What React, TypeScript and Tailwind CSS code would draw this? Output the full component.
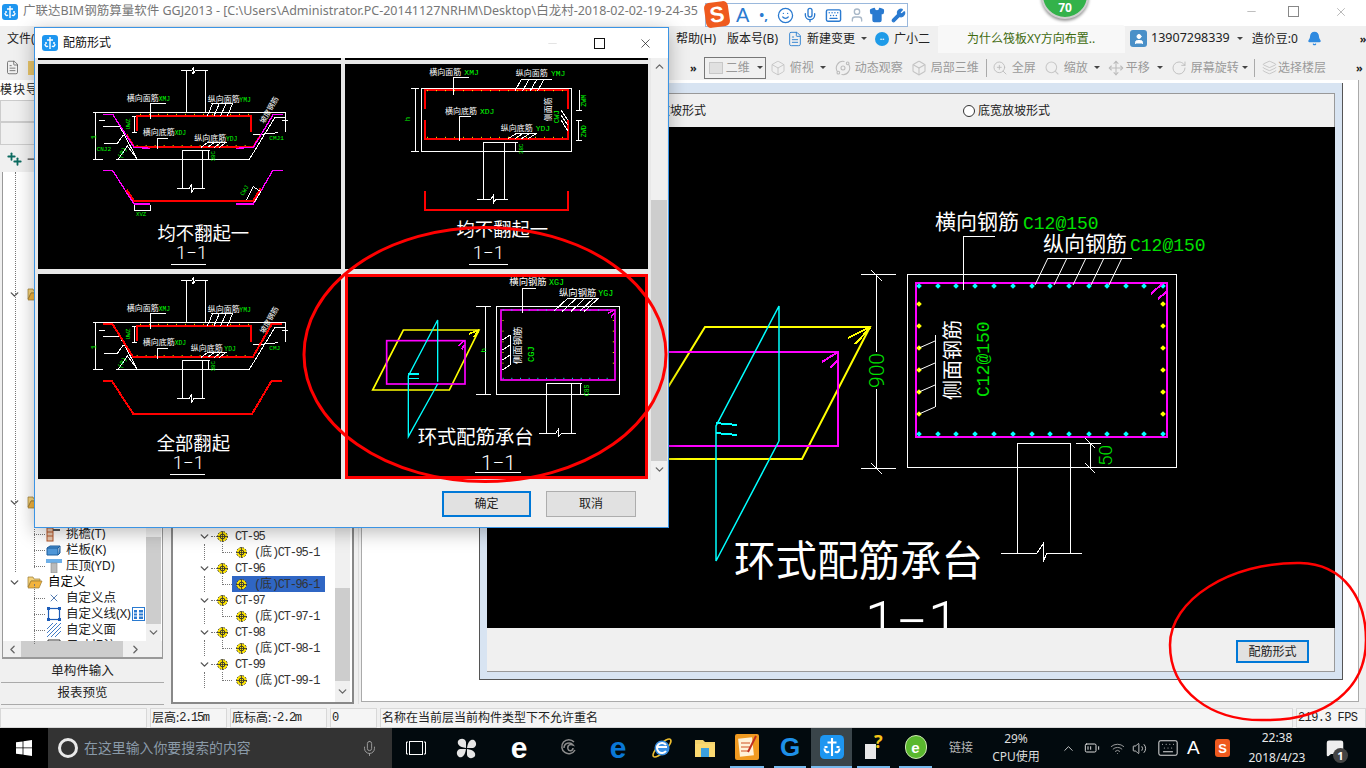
import React from "react";
import {
  Box, ChevronDown, ChevronLeft, ChevronRight, ChevronUp, Keyboard, Layers, Mic, Minus, Move, RotateCw, Search, Shirt, Smile, Volume2, Wifi, Wrench, X, ZoomIn, BatteryMedium, FileText, MessageSquare, Orbit, Bell, User, Plus,
} from "lucide-react";

const CJK = "'Noto Sans CJK SC',sans-serif";
const MONO = "'Liberation Mono','Noto Sans CJK SC',monospace";
const LIGHT = "Roboto,'Liberation Sans',sans-serif";

type PL = { p: string; c?: string; w?: number };
const Pl = ({ p, c = "#fff", w = 3 }: PL) => (
  <polyline points={p} fill="none" stroke={c} strokeWidth={w} shapeRendering="crispEdges" />
);
type TP = { x: number; y: number; t: string; c?: string; s?: number; r?: number; a?: "start" | "middle"; f?: string; fw?: number };
const Tx = ({ x, y, t, c = "#fff", s = 24, r, a = "start", f = CJK, fw }: TP) => (
  <text x={x} y={y} fill={c} fontSize={s} fontFamily={f} fontWeight={fw} textAnchor={a} transform={r !== undefined ? `rotate(${r} ${x} ${y})` : undefined}>
    {t}
  </text>
);
const G = "#00ff00";
const R = "#ff0000";
const M = "#ff00ff";
const Y = "#ffff00";
const C = "#00ffff";

const AppIcon = ({ size = 16 }: { size?: number }) => (
  <svg width={size} height={size} viewBox="0 0 16 16" className="shrink-0">
    <rect width="16" height="16" rx="3" fill="#1e96f0" />
    <path d="M8 2v12M5 5h6M3 9c0 2.5 2 3 3 2M13 9c0 2.5-2 3-3 2M3 8h2M11 8h2" stroke="#fff" strokeWidth="1.4" fill="none" />
  </svg>
);

const Hatch = ({ top, dx, y1, y2, w = 3 }: { top: number[]; dx: number; y1: number; y2: number; w?: number }) => (
  <>
    {top.map((x) => (
      <Pl key={x} p={`${x},${y1} ${x + dx},${y2}`} w={w} />
    ))}
  </>
);

const Trough = ({ all }: { all?: boolean }) => (
  <svg width="303" height="205" viewBox="-6 12 909 615" className="block">
    <Pl p="424,30 456,30 462,22 458,42 468,30 505,30" />
    <Pl p="438,30 438,157" />
    <Pl p="497,30 497,157" />
    <Pl p="185,157 735,157" />
    <Pl p="188,200 240,200 292,298 228,298 628,298 705,172 735,172" />
    <Pl p="428,298 428,272 487,272 487,384" />
    <Pl p="428,298 428,384" />
    <Pl p="412,384 448,384 455,374 455,396 462,384 495,384" />
    <Pl p="487,272 510,272" />
    <Pl p="504,272 504,298" />
    <Pl p="165,157 165,298" />
    <Pl p="158,157 188,157" />
    <Pl p="158,298 188,298" />
    <Pl p="735,157 735,215" />
    <Pl p="176,182 196,182" />
    <Pl p="726,180 744,180" />
    <Pl p="283,168 283,216" />
    <Pl p="276,168 292,168" />
    <Pl p="276,216 292,216" />
    <Pl p="192,250 232,250 250,225" />
    <Pl p="235,298 262,258 292,298" />
    <Pl p="640,225 715,218" />
    <Pl p="292,213 292,167 632,167 632,215" c={R} w={6} />
    <line x1="300" y1="163" x2="628" y2="163" stroke={Y} strokeWidth="3" strokeDasharray="3 24" />
    <line x1="290" y1="257" x2="636" y2="257" stroke={Y} strokeWidth="3" strokeDasharray="3 24" />
    {all ? (
      <>
        <Pl p="188,163 218,163 280,262 638,262 695,163 725,163" c={R} w={6} />
        <Pl p="188,332 215,332 280,432 636,432 695,332 725,332" c={R} w={6} />
      </>
    ) : (
      <>
        <Pl p="260,225 282,260 640,260 662,225" c={R} w={6} />
        <Pl p="190,163 218,163 282,262 330,265" c={M} w={4} />
        <Pl p="588,265 640,262 700,163 730,163" c={M} w={4} />
        <Pl p="190,332 218,332 282,432 330,432" c={M} w={4} />
        <Pl p="588,432 640,432 698,332 728,332" c={M} w={4} />
        <Pl p="260,390 282,422 640,422 662,385" c={R} w={6} />
        <Pl p="283,436 283,450 330,450 330,436" />
        <Pl p="620,420 640,380 662,395 644,425" />
      </>
    )}
    <Tx x={260} y={123} t="横向面筋" s={24} />
    <Tx x={356} y={123} t="XMJ" c={G} s={19} f={MONO} />
    <Pl p="332,177 332,130 378,130" />
    <Tx x={503} y={126} t="纵向面筋" s={24} />
    <Tx x={598} y={126} t="YMJ" c={G} s={19} f={MONO} />
    <Pl p="512,130 578,130" />
    <Hatch top={[518, 538, 558, 578]} dx={-16} y1={130} y2={168} />
    <Tx x={308} y={226} t="横向底筋" s={24} />
    <Tx x={404} y={226} t="XDJ" c={G} s={19} f={MONO} />
    <Pl p="352,266 352,235 385,235" />
    <Tx x={all ? 452 : 463} y={242} t="纵向底筋" s={24} />
    <Tx x={all ? 553 : 558} y={242} t="YDJ" c={G} s={19} f={MONO} />
    <Pl p="500,246 560,246" />
    <Hatch top={[505, 525, 545, 560]} dx={-22} y1={246} y2={262} />
    <Tx x={270} y={208} t="UWZ" c={G} s={18} r={-90} f={MONO} />
    <Tx x={167} y={238} t="1" c={G} s={22} r={-90} f={MONO} />
    {all ? null : <Tx x={170} y={272} t="CNJ2" c={G} s={18} f={MONO} />}
    <Tx x={688} y={240} t={all ? "CMJ" : "CMJ1"} c={G} s={18} f={MONO} />
    <Tx x={526} y={304} t="38C" c={G} s={17} r={-90} f={MONO} />
    <Tx x={243} y={296} t="(P)" c={G} s={19} r={-60} f={MONO} />
    <Tx x={672} y={192} t="坡度钢筋" s={22} r={-60} />
    {all ? null : <Tx x={610} y={408} t="CWJ" c={G} s={18} r={-60} f={MONO} />}
    {all ? null : <Tx x={288} y={467} t="XVZ" c={G} s={17} f={MONO} />}
    <Tx x={all ? 460 : 490} y={540} t={all ? "全部翻起" : "均不翻起一"} s={55} a="middle" />
    <Tx x={all ? 445 : 455} y={597} t="1−1" s={56} a="middle" f={LIGHT} fw={300} />
    <Pl p={all ? "390,612 495,612" : "393,612 497,612"} />
  </svg>
);

const Flat = () => (
  <svg width="303" height="205" viewBox="0 12 909 615" className="block">
    <rect x="229" y="85" width="451" height="190" fill="none" stroke="#fff" strokeWidth="3" shapeRendering="crispEdges" />
    <Pl p="240,148 240,90 668,90 668,148" c={R} w={6} />
    <Pl p="240,180 240,236 668,236 668,180" c={R} w={6} />
    <line x1="246" y1="92" x2="660" y2="92" stroke={Y} strokeWidth="3" strokeDasharray="3 24" />
    <line x1="246" y1="232" x2="660" y2="232" stroke={Y} strokeWidth="3" strokeDasharray="3 24" />
    <Pl p="415,418 415,248 478,248 478,418" />
    <Pl p="397,418 438,418 445,406 445,430 452,418 490,418" />
    <Pl p="240,393 240,450 668,450 668,393" c={R} w={6} />
    <Pl p="210,85 210,275" />
    <Pl p="197,85 222,85" />
    <Pl p="197,275 222,275" />
    <Tx x={194} y={184} t="h" c={G} s={22} r={-90} f={MONO} />
    <Tx x={253} y={45} t="横向面筋" s={24} />
    <Tx x={358} y={45} t="XMJ" c={G} s={24} f={MONO} />
    <Pl p="325,105 325,52 372,52" />
    <Tx x={512} y={48} t="纵向面筋" s={24} />
    <Tx x={618} y={48} t="YMJ" c={G} s={24} f={MONO} />
    <Pl p="530,57 620,57" />
    <Hatch top={[530, 553, 576, 598]} dx={-20} y1={57} y2={92} />
    <Tx x={300} y={162} t="横向底筋" s={24} />
    <Tx x={405} y={162} t="XDJ" c={G} s={24} f={MONO} />
    <Pl p="343,242 343,170 378,170" />
    <Tx x={467} y={213} t="纵向底筋" s={24} />
    <Tx x={572} y={213} t="YDJ" c={G} s={24} f={MONO} />
    <Pl p="515,220 575,220" />
    <Hatch top={[515, 535, 555, 575]} dx={-26} y1={220} y2={236} />
    <Tx x={618} y={184} t="侧面筋" s={24} r={-90} />
    <Tx x={642} y={190} t="CWJ" c={G} s={22} r={-90} f={MONO} />
    <Pl p="648,150 668,180" />
    <Pl p="648,165 668,195" />
    <Pl p="648,180 668,212" />
    <Pl p="703,90 703,152" />
    <Pl p="694,152 712,152" />
    <Pl p="700,182 700,240" />
    <Pl p="692,182 712,182" />
    <Pl p="692,240 712,240" />
    <Tx x={724} y={140} t="ZWM" c={G} s={20} r={-90} f={MONO} />
    <Tx x={724} y={232} t="ZWD" c={G} s={20} r={-90} f={MONO} />
    <Pl p="512,248 512,275" />
    <Pl p="478,248 520,248" />
    <Tx x={534} y={282} t="38C" c={G} s={17} r={-90} f={MONO} />
    <Tx x={472} y={528} t="均不翻起一" s={55} a="middle" />
    <Tx x={430} y={597} t="1−1" s={56} a="middle" f={LIGHT} fw={300} />
    <Pl p="372,612 490,612" />
  </svg>
);

const Ring = () => (
  <svg width="297" height="199" viewBox="9 21 891 597" className="block">
    <polygon points="175,180 402,180 313,360 83,360" fill="none" stroke={Y} strokeWidth="5" />
    <Pl p="372,192 402,180" c={Y} w={5} />
    <Pl p="385,202 402,182" c={Y} w={5} />
    <rect x="125" y="212" width="235" height="130" fill="none" stroke={M} strokeWidth="5" />
    <Pl p="340,228 358,212" c={M} w={5} />
    <Pl p="350,238 358,225" c={M} w={5} />
    <polyline points="278,335 278,150 190,318 190,500 278,342" fill="none" stroke={C} strokeWidth="4" />
    <Pl p="190,312 222,312" c={C} w={4} />
    <Pl p="190,326 222,326" c={C} w={4} />
    <rect x="454" y="109" width="370" height="265" fill="none" stroke="#fff" strokeWidth="3" shapeRendering="crispEdges" />
    <rect x="468" y="120" width="342" height="210" fill="none" stroke={M} strokeWidth="5" />
    <line x1="473" y1="120" x2="808" y2="120" stroke={C} strokeWidth="3" strokeDasharray="3 23" />
    <line x1="473" y1="325" x2="808" y2="325" stroke={C} strokeWidth="3" strokeDasharray="3 23" />
    <line x1="474" y1="150" x2="474" y2="310" stroke={Y} strokeWidth="3" strokeDasharray="3 29" />
    <line x1="805" y1="150" x2="805" y2="310" stroke={Y} strokeWidth="3" strokeDasharray="3 29" />
    <Pl p="788,130 808,120" c={M} w={4} />
    <Pl p="798,142 808,128" c={M} w={4} />
    <Pl p="604,490 604,340 680,340 680,490" />
    <Pl p="583,490 632,490 640,478 640,500 650,490 692,490" />
    <Pl p="420,109 420,372" />
    <Pl p="393,109 438,109" />
    <Pl p="393,372 438,372" />
    <Tx x={424} y={248} t="h" c={G} s={24} r={-90} f={MONO} />
    <Tx x={493} y={46} t="横向钢筋" s={28} />
    <Tx x={612} y={46} t="XGJ" c={G} s={25} f={MONO} />
    <Pl p="533,130 533,55 572,55" />
    <Tx x={642} y={77} t="纵向钢筋" s={28} />
    <Tx x={760} y={77} t="YGJ" c={G} s={25} f={MONO} />
    <Pl p="665,85 762,85" />
    <Hatch top={[668, 694, 720, 746, 760]} dx={-42} y1={85} y2={124} />
    <Tx x={528} y={282} t="侧面钢筋" s={28} r={-90} />
    <Tx x={566} y={276} t="CGJ" c={G} s={26} r={-90} f={MONO} />
    <Pl p="495,195 495,285" />
    <Pl p="472,210 495,195" />
    <Pl p="472,240 495,225" />
    <Pl p="472,270 495,255" />
    <Pl p="472,300 495,285" />
    <Pl p="680,340 712,340" />
    <Pl p="706,340 706,374" />
    <Tx x={732} y={378} t="C8S" c={G} s={19} r={-90} f={MONO} />
    <Tx x={392} y={522} t="环式配筋承台" s={58} a="middle" />
    <Tx x={460} y={600} t="1−1" s={62} a="middle" f={LIGHT} fw={300} />
    <Pl p="390,608 527,608" />
  </svg>
);

const MainDrawing = () => {
  const topX = [919, 938, 956, 975, 994, 1013, 1032, 1050, 1069, 1089, 1107, 1126, 1144, 1163];
  const sideY = [304, 326, 348, 370, 392, 414];
  return (
    <svg width="848" height="501" viewBox="487 127 848 501" className="block">
      <polygon points="705,327 870,327 802,459 624,459" fill="none" stroke={Y} strokeWidth="2" />
      <Pl p="848,338 870,327" c={Y} w={2} />
      <Pl p="855,344 870,328" c={Y} w={2} />
      <rect x="590" y="352" width="248" height="94" fill="none" stroke={M} strokeWidth="2" />
      <Pl p="822,362 838,352" c={M} w={2} />
      <Pl p="830,368 838,360" c={M} w={2} />
      <polyline points="779,441 779,306 716,426 716,561 779,441" fill="none" stroke={C} strokeWidth="1.5" />
      <Pl p="716,423 737,425" c={C} w={2} />
      <Pl p="716,433 737,435" c={C} w={2} />
      <rect x="907.5" y="274.5" width="269" height="193" fill="none" stroke="#fff" strokeWidth="1" />
      <rect x="916" y="283" width="251" height="154" fill="none" stroke={M} strokeWidth="2" />
      {topX.map((x) => (
        <React.Fragment key={x}>
          <rect x={x - 2} y="284" width="4" height="4" fill={C} transform={`rotate(45 ${x} 286)`} />
          <rect x={x - 2} y="432" width="4" height="4" fill={C} transform={`rotate(45 ${x} 434)`} />
        </React.Fragment>
      ))}
      {sideY.map((y) => (
        <React.Fragment key={y}>
          <rect x="917" y={y - 2} width="4" height="4" fill={Y} transform={`rotate(45 919 ${y})`} />
          <rect x="1161" y={y - 2} width="4" height="4" fill={Y} transform={`rotate(45 1163 ${y})`} />
        </React.Fragment>
      ))}
      <Pl p="1151,294 1163,283" c={M} w={2} />
      <Pl p="1158,299 1166,292" c={M} w={2} />
      <Pl p="876,274 876,352" w={1} />
      <Pl p="876,389 876,468" w={1} />
      <Pl p="861,274 896,274" w={1} />
      <Pl p="861,468 896,468" w={1} />
      <line x1="871" y1="270" x2="882" y2="281" stroke="#fff" />
      <line x1="871" y1="463" x2="882" y2="474" stroke="#fff" />
      <Tx x={884} y={388} t="900" c="#00e000" s={21} r={-90} f={LIGHT} fw={300} />
      <Tx x={935} y={229} t="横向钢筋" s={21} />
      <Tx x={1023} y={229} t="C12@150" c="#00e000" s={18} f={MONO} />
      <Pl p="963,290 963,236 995,236" w={1} />
      <Tx x={1043} y={251} t="纵向钢筋" s={21} />
      <Tx x={1130} y={251} t="C12@150" c="#00e000" s={18} f={MONO} />
      <Pl p="1048,258 1132,258" w={1} />
      {[1048, 1067, 1086, 1104, 1122].map((x) => (
        <line key={x} x1={x} y1="258" x2={x - 13} y2="285" stroke="#fff" />
      ))}
      <Tx x={960} y={400} t="侧面钢筋" s={20} r={-90} />
      <Tx x={989} y={397} t="C12@150" c="#00e000" s={18} r={-90} f={MONO} />
      <Pl p="935,335 935,407" w={1} />
      <line x1="919" y1="348" x2="935" y2="341" stroke="#fff" />
      <line x1="919" y1="370" x2="935" y2="363" stroke="#fff" />
      <line x1="919" y1="392" x2="935" y2="385" stroke="#fff" />
      <line x1="919" y1="414" x2="935" y2="407" stroke="#fff" />
      <Pl p="1017,553 1017,443 1070,443 1070,553" w={1} />
      <Pl p="1001,553 1037,553 1043,544 1043,562 1047,553 1082,553" w={1} />
      <Pl p="1076,443 1101,443" w={1} />
      <Pl p="1090,443 1090,468" w={1} />
      <line x1="1085" y1="438" x2="1095" y2="448" stroke="#fff" />
      <line x1="1085" y1="463" x2="1095" y2="473" stroke="#fff" />
      <Tx x={1112} y={466} t="50" c="#00e000" s={19} r={-90} f={LIGHT} fw={300} />
      <Tx x={734} y={576} t="环式配筋承台" s={41.5} />
      <Tx x={912} y={641} t="1−1" s={56} a="middle" f={LIGHT} fw={300} />
    </svg>
  );
};

const Caret = () => <span className="w-0 h-0 border-x-[3px] border-x-transparent border-t-[3px] border-t-[#444] shrink-0" />;
const DChev = ({ className = "" }: { className?: string }) => (
  <span className={`text-[11px] font-bold text-[#222] leading-none ${className}`}>»</span>
);

const Gear = () => (
  <svg width="11" height="11" viewBox="0 0 11 11" className="shrink-0">
    <circle cx="5.5" cy="5.5" r="5" fill="#ffe600" stroke="#333" strokeDasharray="1.5 1.5" />
    <circle cx="5.5" cy="5.5" r="2.4" fill="#ffe600" stroke="#333" />
    <path d="M5.5 0v11M0 5.5h11" stroke="#333" strokeWidth=".8" />
  </svg>
);

const Mn = ({ children }: { children: React.ReactNode }) => (
  <span className="[font-family:'Liberation_Mono',monospace] tracking-[-1.3px] text-[12px]">{children}</span>
);

const Folder = () => (
  <svg width="16" height="14" viewBox="0 0 16 14" className="shrink-0">
    <path d="M1 2h5l1 2h6v2H4L1 12z" fill="#f4d27a" stroke="#9a7a30" strokeWidth=".7" />
    <path d="M4 6h11l-3 7H1z" fill="#f2b33d" stroke="#9a7a30" strokeWidth=".7" />
  </svg>
);

const LeftRow = ({ icon, children, extra }: { icon: React.ReactNode; children: React.ReactNode; extra?: React.ReactNode }) => (
  <div className="flex items-center h-4 pl-[31px] text-[12.5px] leading-none whitespace-nowrap text-[#222]">
    <span className="w-[11px] border-t border-dotted border-[#777] shrink-0" />
    <span className="w-[17px] flex justify-center shrink-0">{icon}</span>
    <span className="ml-[4px] pt-[1px]">{children}</span>
    {extra}
  </div>
);

const MidParent = ({ t }: { t: string }) => (
  <div className="flex items-center h-4 pl-[25px] text-[#333]">
    <ChevronDown size={13} strokeWidth={2.6} className="text-[#555] shrink-0" />
    <span className="w-[6px] border-t border-dotted border-[#777] shrink-0" />
    <Gear />
    <span className="ml-[7px]"><Mn>{t}</Mn></span>
  </div>
);
const MidChild = ({ t, sel }: { t: string; sel?: boolean }) => (
  <div className="relative flex items-center h-4 pl-[59px] text-[#333]">
    <span className="absolute left-[31px] top-0 h-4 border-l border-dotted border-[#777]" />
    <span className="absolute left-[49px] top-0 h-[9px] w-[10px] border-l border-b border-dotted border-[#777]" />
    <div className={`flex items-center h-4 w-[93px] pl-[4px] ${sel ? "bg-[#2f66c4]" : ""}`}>
      <Gear />
      <span className="ml-[7px] text-[12px] whitespace-nowrap leading-none"><Mn>(</Mn>底<Mn>){t}</Mn></span>
    </div>
  </div>
);

const Tool = ({ icon, label, ml, caret, gap = "ml-[4px]" }: { icon: React.ReactNode; label: string; ml: string; caret?: string; gap?: string }) => (
  <div className={`flex items-center shrink-0 ${ml}`}>
    {icon}
    <span className={`${gap} text-[12px] text-[#9a9a9a] whitespace-nowrap`}>{label}</span>
    {caret ? <span className={`${caret} flex`}><Caret /></span> : null}
  </div>
);

const Status = ({ w, children, mono }: { w: string; children?: React.ReactNode; mono?: boolean }) => (
  <div className={`${w} h-[20px] shrink-0 border border-[#d8d8d8] bg-[#f5f5f5] flex items-center px-[1px] text-[12px] text-[#222] whitespace-nowrap overflow-hidden ${mono ? "[font-family:'Liberation_Mono',monospace] tracking-[-0.6px]" : ""}`}>
    {children}
  </div>
);

const TaskBtn = ({ w, children, line, bg }: { w: string; children: React.ReactNode; line?: boolean; bg?: string }) => (
  <div className={`${w} h-full shrink-0 flex items-center justify-center ${line ? "border-b-2 border-[#76b9ed]" : ""} ${bg ?? ""}`}>{children}</div>
);

export default function App() {
  return (
    <div className="relative w-[1366px] h-[768px] overflow-hidden flex flex-col bg-[#f0f0f0] [font-family:'Noto_Sans','Noto_Sans_CJK_SC',sans-serif]">
      {/* title bar */}
      <div className="h-[26px] shrink-0 bg-white flex items-center pl-[2px] pb-[3px]">
        <AppIcon />
        <span className="ml-[5px] text-[12.5px] text-[#777] whitespace-nowrap w-[678px] shrink-0">广联达BIM钢筋算量软件 GGJ2013 - [C:\Users\Administrator.PC-20141127NRHM\Desktop\白龙村-2018-02-02-19-24-35</span>
        <div className="ml-[544px] flex items-center">
          <Minus size={13} strokeWidth={1} className="text-[#888]" />
          <span className="ml-[30px] relative block w-[11px] h-[11px] border border-[#888]" />
          <X size={14} strokeWidth={1} className="ml-[35px] text-[#888]" />
        </div>
      </div>

      {/* menu */}
      <div className="h-[27px] shrink-0 flex items-center pb-[2px] text-[12px] text-[#222] whitespace-nowrap">
        <span className="w-[676px] pl-[7px] shrink-0">文件(F)</span>
        <span className="w-[51px] shrink-0">帮助(H)</span>
        <span className="w-[60px] shrink-0">版本号(B)</span>
        <FileText size={16} strokeWidth={1.4} className="text-[#2b7fd0] shrink-0" />
        <span className="ml-[4px]">新建变更</span>
        <span className="ml-[6px] flex"><Caret /></span>
        <span className="ml-[8px] w-[14px] h-[14px] rounded-full bg-[#1e9be8] flex items-center justify-center text-[8px] text-white font-bold shrink-0">··</span>
        <span className="ml-[5px]">广小二</span>
        <div className="ml-[8px] w-[187px] h-[28px] bg-[#f8f8f8] rounded-t-[3px] text-[#3f6b10] pl-[29px] flex items-center shrink-0">为什么筏板XY方向布置..</div>
        <span className="ml-[5px] w-[17px] h-[17px] rounded-[3px] bg-[#4a90c8] flex items-center justify-center shrink-0"><User size={12} fill="#fff" className="text-white" /></span>
        <span className="ml-[4px] text-[12.5px]">13907298339</span>
        <span className="ml-[7px] flex"><Caret /></span>
        <span className="ml-[9px]">造价豆:0</span>
        <Bell size={15} fill="#2f8ae0" className="ml-[9px] text-[#2f8ae0] shrink-0" />
        <DChev className="ml-[38px]" />
      </div>

      {/* toolbar */}
      <div className="h-[27px] shrink-0 flex items-center pt-[2px]">
        <FileText size={15} strokeWidth={1.2} className="ml-[5px] text-[#555] shrink-0" />
        <svg width="8" height="14" viewBox="0 0 8 14" className="ml-[8px] shrink-0"><rect width="8" height="14" fill="#e8c56a" /></svg>
        <DChev className="ml-[654px]" />
        <div className="ml-[7px] w-[62px] h-[22px] shrink-0 border border-[#777] flex items-center pl-[4px] whitespace-nowrap">
          <span className="w-[14px] h-[12px] bg-[#e0e0e0] border border-[#c8c8c8] shrink-0" />
          <span className="ml-[3px] text-[12px] text-[#999]">二维</span>
          <span className="ml-[7px] flex"><Caret /></span>
        </div>
        <Tool ml="ml-[4px]" icon={<Box size={16} strokeWidth={1} className="text-[#b5b5b5]" />} label="俯视" caret="ml-[6px]" />
        <Tool ml="ml-[9px]" icon={<Orbit size={16} strokeWidth={1.6} className="text-[#bcbcbc]" />} label="动态观察" />
        <Tool ml="ml-[8px]" icon={<Box size={16} strokeWidth={1.6} className="text-[#c4c4c4]" />} label="局部三维" />
        <span className="ml-[7px] w-px h-[18px] bg-[#aaa] shrink-0" />
        <Tool ml="ml-[5px]" icon={<ZoomIn size={16} strokeWidth={1.3} className="text-[#bbb]" />} label="全屏" />
        <Tool ml="ml-[8px]" icon={<Search size={16} strokeWidth={1.6} className="text-[#c8c8c8]" />} label="缩放" caret="ml-[6px]" />
        <Tool ml="ml-[8px]" gap="ml-[2px]" icon={<Move size={16} strokeWidth={1.6} className="text-[#bbb]" />} label="平移" caret="ml-[7px]" />
        <Tool ml="ml-[8px]" icon={<RotateCw size={16} strokeWidth={1.3} className="text-[#bbb]" />} label="屏幕旋转" caret="ml-[3px]" />
        <span className="ml-[6px] w-px h-[18px] bg-[#aaa] shrink-0" />
        <Tool ml="ml-[7px]" gap="ml-[1px]" icon={<Layers size={15} strokeWidth={1.2} className="text-[#bbb]" />} label="选择楼层" />
        <DChev className="ml-[30px]" />
      </div>

      {/* body */}
      <div className="h-[628px] shrink-0 flex bg-[#f0f0f0]">
        {/* left panel */}
        <div className="w-[165px] shrink-0 flex flex-col">
          <div className="h-[20px] shrink-0 bg-white text-[12px] tracking-[1px] text-[#222] leading-[20px] whitespace-nowrap overflow-hidden">模块导航栏</div>
          <div className="h-[22px] shrink-0 border border-[#ccc] bg-[#f0f0f0]" />
          <div className="h-[23px] shrink-0 border border-[#ccc] bg-[#f0f0f0]" />
          <div className="h-[27px] shrink-0 flex items-center bg-[#f0f0f0] pl-[6px]">
            <span className="relative w-[17px] h-[15px] block">
              <Plus size={11} strokeWidth={4} className="absolute left-0 top-0 text-[#0c6b60]" />
              <Plus size={11} strokeWidth={4} className="absolute left-[6px] top-[5px] text-[#0c6b60]" />
            </span>
            <Minus size={10} strokeWidth={3} className="ml-[3px] text-[#444]" />
          </div>
          <div className="relative flex-1 min-h-0 mx-[2px] border-b-2 border-x border-[#999] bg-white flex flex-col overflow-hidden">
            <div className="absolute left-[12px] top-0 h-[400px] border-l border-dotted border-[#777]" />
            <div className="absolute left-[31px] top-[336px] h-[60px] border-l border-dotted border-[#777]" />
            <div className="absolute left-[31px] top-[412px] h-[60px] border-l border-dotted border-[#777]" />
            <div className="flex-1 min-h-0 flex">
              <div className="w-[143px] shrink-0 pt-[114px] overflow-hidden">
                <div className="flex items-center h-4 pl-[5px]">
                  <ChevronDown size={13} strokeWidth={2.6} className="text-[#555]" /><span className="ml-[6px]"><Folder /></span>
                </div>
                <div className="h-[192px]" />
                <div className="flex items-center h-4 pl-[5px]">
                  <ChevronDown size={13} strokeWidth={2.6} className="text-[#555]" /><span className="ml-[6px]"><Folder /></span>
                </div>
                <div className="h-4" />
                <LeftRow icon={<svg width="15" height="15" viewBox="0 0 15 15"><rect x="1" y="1" width="6" height="13" fill="#e8c8b0" stroke="#b3562a" /><path d="M7 3h7" stroke="#555" strokeWidth="2" /><path d="M1 5h6M1 9h6" stroke="#b3562a" /></svg>}>挑檐(T)</LeftRow>
                <LeftRow icon={<svg width="15" height="11" viewBox="0 0 15 11"><path d="M1 3h11v7H1zM1 3l3-2h10l-2 2M14 1v7l-2 2" fill="#4f97d8" stroke="#1c5c9c" /></svg>}>栏板(K)</LeftRow>
                <LeftRow icon={<svg width="16" height="14" viewBox="0 0 16 14"><rect y="0" width="16" height="4" fill="#6fb0e8" /><rect x="5" y="4" width="6" height="10" fill="#bbb" stroke="#888" strokeWidth=".6" /></svg>}>压顶(YD)</LeftRow>
                <div className="flex items-center h-4 pl-[5px] text-[12.5px]">
                  <ChevronDown size={13} strokeWidth={2.6} className="text-[#555]" /><span className="ml-[6px]"><Folder /></span><span className="ml-[5px] pt-[1px]">自定义</span>
                </div>
                <LeftRow icon={<X size={12} strokeWidth={1.6} className="text-[#2a5a9c]" />}>自定义点</LeftRow>
                <LeftRow
                  icon={<svg width="14" height="14" viewBox="0 0 14 14"><rect x="1.5" y="1.5" width="11" height="11" fill="none" stroke="#1c5cb8" strokeWidth="1.2" /><path d="M0 0h3v3H0zM11 0h3v3h-3zM0 11h3v3H0zM11 11h3v3h-3z" fill="#1c5cb8" /></svg>}
                  extra={<svg width="13" height="14" viewBox="0 0 13 14" className="ml-[1px] shrink-0"><rect x=".5" y=".5" width="12" height="13" fill="#fff" stroke="#2a7ad0" /><path d="M2 3h3v9H2zM7 3h4v9H7z" fill="#2a7ad0" /><path d="M2 6h3M2 9h3M7 6h4M7 9h4" stroke="#fff" /></svg>}
                >
                  自定义线(X)
                </LeftRow>
                <LeftRow icon={<svg width="14" height="14" viewBox="0 0 14 14"><path d="M0 6L6 0M0 10L10 0M0 14L14 0M4 14L14 4M8 14l6-6" stroke="#2a6cc0" strokeWidth=".9" /></svg>}>自定义面</LeftRow>
                <LeftRow icon={<svg width="14" height="14" viewBox="0 0 14 14"><path d="M1 1h12v12H1z" fill="none" stroke="#333" /></svg>}>尺寸标注(W)</LeftRow>
              </div>
              <div className="w-[15px] shrink-0 bg-[#f0f0f0] flex flex-col justify-end items-center">
                <div className="w-full h-[87px] bg-[#cdcdcd]" />
                <ChevronDown size={13} strokeWidth={2.4} className="text-[#666] my-[2px]" />
              </div>
            </div>
            <div className="h-[16px] shrink-0 bg-[#f0f0f0] flex items-center">
              <ChevronLeft size={13} strokeWidth={2.4} className="ml-[3px] text-[#666]" />
              <div className="ml-[2px] w-[102px] h-full bg-[#cdcdcd]" />
              <ChevronRight size={13} strokeWidth={2.4} className="ml-[6px] text-[#666]" />
            </div>
          </div>
          <div className="mt-[2px] mx-[1px] h-[22px] shrink-0 border-b border-[#aaa] flex items-center justify-center text-[12.5px] text-[#222]">单构件输入</div>
          <div className="h-[22px] mx-[1px] shrink-0 border-b border-[#aaa] mb-[3px] flex items-center justify-center text-[12.5px] text-[#222]">报表预览</div>
        </div>

        {/* middle tree */}
        <div className="ml-[6px] w-[183px] h-[624px] shrink-0 border-x-2 border-b-2 border-[#888] bg-white flex">
          <div className="flex-1 flex flex-col justify-end pb-[14px] text-[12px]">
            {[95, 96, 97, 98, 99].map((n) => (
              <React.Fragment key={n}>
                <MidParent t={`CT-${n}`} />
                <MidChild t={`CT-${n}-1`} sel={n === 96} />
              </React.Fragment>
            ))}
          </div>
          <div className="w-[15px] shrink-0 mr-[2px] bg-[#f0f0f0] flex flex-col justify-end items-center">
            <div className="w-full h-[93px] bg-[#cdcdcd]" />
            <ChevronDown size={13} strokeWidth={2.4} className="text-[#666] my-[4px]" />
          </div>
        </div>

        {/* right frame */}
        <div className="ml-[4px] w-[1001px] h-[624px] shrink-0 bg-[#f0f0f0] border-l border-[#ddd] pl-[3px] pb-[2px] pr-[6px]">
          <div className="w-[998px] h-[622px] -ml-[1px] border-l border-b border-r border-[#aaa] bg-white pl-[117px] pt-[3px]">
            <div className="w-[864px] h-[597px] bg-[#d8e4f2] border-r border-b border-l border-[#555] pl-[7px] pr-[7px] pt-[10px]">
              <div className="w-[848px] h-[579px] bg-[#f0f0f0] border-t border-r border-b border-[#999] flex flex-col">
                <div className="h-[33px] shrink-0 flex items-center text-[12px] text-[#222] whitespace-nowrap">
                  <span className="ml-[171px]">放坡形式</span>
                  <span className="ml-[257px] w-[12px] h-[12px] rounded-full border border-[#333] bg-white shrink-0" />
                  <span className="ml-[3px]">底宽放坡形式</span>
                </div>
                <div className="h-[501px] w-[848px] bg-black overflow-hidden shrink-0">
                  <MainDrawing />
                </div>
                <div className="flex-1 flex items-start justify-end pr-[25px] pt-[12px]">
                  <div className="w-[73px] h-[23px] border-2 border-[#0078d7] bg-[#e1e1e1] flex items-center justify-center text-[12px] text-[#222]">配筋形式</div>
                </div>
              </div>
            </div>
          </div>
        </div>
      </div>

      {/* status */}
      <div className="h-[20px] shrink-0 flex gap-[3px] bg-[#f0f0f0]">
        <Status w="w-[147px]" />
        <Status w="w-[77px]">层高:<Mn>2.15m</Mn></Status>
        <Status w="w-[97px]">底标高:<Mn>-2.2m</Mn></Status>
        <Status w="w-[47px]"><Mn>0</Mn></Status>
        <Status w="w-[913px]">名称在当前层当前构件类型下不允许重名</Status>
        <Status w="w-[70px]" mono>219.3 FPS</Status>
      </div>

      {/* taskbar */}
      <div className="h-[40px] shrink-0 flex bg-[#020a0e] text-white">
        <div className="w-[48px] h-full bg-black flex items-center justify-center shrink-0">
          <svg width="16" height="16" viewBox="0 0 16 16"><path d="M0 2.3L6.6 1.4V7.5H0zM7.4 1.3L16 0V7.5H7.4zM0 8.3H6.6V14.6L0 13.7zM7.4 8.3H16V16L7.4 14.8z" fill="#fff" /></svg>
        </div>
        <div className="w-[344px] h-full bg-[#333333] flex items-center shrink-0">
          <span className="ml-[10px] w-[20px] h-[20px] rounded-full border-[3px] border-[#e8e8e8] shrink-0" />
          <span className="ml-[6px] text-[13.9px] text-[#8a9aa8] whitespace-nowrap">在这里输入你要搜索的内容</span>
          <Mic size={17} strokeWidth={1.2} className="ml-[110px] text-[#aaa] shrink-0" />
        </div>
        <TaskBtn w="w-[48px]"><svg width="20" height="14" viewBox="0 0 20 14"><rect x="3.5" y=".5" width="13" height="13" fill="none" stroke="#fff" /><path d="M2 1H.5v12H2M18 1h1.5v12H18" fill="none" stroke="#fff" /></svg></TaskBtn>
        <TaskBtn w="w-[52px]"><svg width="21" height="21" viewBox="0 0 21 21"><path d="M10 10C3 9 1 6 2 3c2-3 7-3 8 1zM11 10c1-7 4-9 7-8 3 2 3 7-1 8zM11 11c7 1 9 4 8 7-2 3-7 3-8-1zM10 11c-1 7-4 9-7 8-3-2-3-7 1-8z" fill="#e6e6e6" /></svg></TaskBtn>
        <TaskBtn w="w-[54px]"><span className="text-[30px] font-bold leading-none text-white [font-family:'Liberation_Sans',sans-serif]">e</span></TaskBtn>
        <TaskBtn w="w-[46px]"><svg width="20" height="22" viewBox="0 0 20 22"><path d="M15 5a7 7 0 1 0 1 8M5 11a5 5 0 0 1 9-3c-3-1-6 0-5 4 1 3 5 2 5-1" fill="none" stroke="#8c8c8c" strokeWidth="1.5" /></svg></TaskBtn>
        <TaskBtn w="w-[52px]"><span className="text-[30px] font-bold leading-none text-[#0a78d7] [font-family:'Liberation_Sans',sans-serif]">e</span></TaskBtn>
        <TaskBtn w="w-[36px]">
          <svg width="26" height="24" viewBox="0 0 26 24"><ellipse cx="13" cy="12" rx="12" ry="4" transform="rotate(-45 13 12)" fill="none" stroke="#f0c030" strokeWidth="1.6" /><circle cx="13" cy="12" r="7.5" fill="#3a8fe0" /><path d="M8 11h10M17 15a5 5 0 1 1 0-6" stroke="#fff" strokeWidth="2" fill="none" /></svg>
        </TaskBtn>
        <TaskBtn w="w-[50px]"><svg width="22" height="20" viewBox="0 0 22 20"><path d="M1 2h8l2 2h10v3H1z" fill="#f3d36d" /><rect x="1" y="6" width="20" height="13" fill="#fbd971" /><rect x="7" y="10" width="8" height="9" fill="#3aa0e0" /></svg></TaskBtn>
        <TaskBtn w="w-[34px]" line><svg width="24" height="26" viewBox="0 0 24 26"><rect width="24" height="26" rx="2" fill="#f09a20" /><rect x="4" y="4" width="14" height="18" fill="#fff2d8" transform="rotate(-6 11 13)" /><path d="M6 9h9M6 13h9M6 17h7" stroke="#d05020" /><path d="M21 2L13 18" stroke="#c03020" strokeWidth="2" /></svg></TaskBtn>
        <div className="ml-[10px] flex h-full shrink-0">
          <TaskBtn w="w-[32px]" line><span className="text-[26px] font-bold text-[#1e90e8] leading-none [font-family:'Liberation_Sans',sans-serif]">G</span></TaskBtn>
        </div>
        <div className="ml-[5px] flex h-full shrink-0">
          <TaskBtn w="w-[41px]" line bg="bg-[#3a454a]"><AppIcon size={24} /></TaskBtn>
        </div>
        <div className="ml-[5px] flex h-full shrink-0">
          <TaskBtn w="w-[33px]" line>
            <span className="relative w-[18px] h-[24px] block">
              <span className="absolute left-0 bottom-0 w-[11px] h-[15px] bg-[#e8e8e8]" />
              <span className="absolute right-0 top-[-3px] text-[18px] font-bold text-[#f5c518] leading-none">?</span>
            </span>
          </TaskBtn>
        </div>
        <div className="ml-[9px] flex h-full shrink-0">
          <TaskBtn w="w-[33px]" line>
            <span className="w-[22px] h-[24px] rounded-full bg-[#5ab82e] border border-[#cce8b0] flex items-center justify-center text-[15px] font-bold leading-none text-white [font-family:'Liberation_Sans',sans-serif]">e</span>
          </TaskBtn>
        </div>
        <span className="ml-[17px] self-center text-[12px] text-[#b8b8b8] w-[24px] whitespace-nowrap">链接</span>
        <div className="ml-[18px] w-[50px] h-full flex flex-col items-center justify-center text-[12px] leading-[18px] text-[#ddd] whitespace-nowrap shrink-0">
          <span>29%</span>
          <span>CPU使用</span>
        </div>
        <ChevronUp size={15} strokeWidth={1.4} className="ml-[20px] self-center text-[#ddd] shrink-0" />
        <BatteryMedium size={16} strokeWidth={1.5} className="ml-[8px] self-center text-[#ddd] shrink-0" />
        <Wifi size={15} strokeWidth={1.4} className="ml-[10px] self-center text-[#aaa] shrink-0" />
        <Volume2 size={15} strokeWidth={1.4} className="ml-[7px] self-center text-[#ddd] shrink-0" />
        <Keyboard size={22} strokeWidth={1.1} className="ml-[10px] self-center text-[#ddd] shrink-0" />
        <span className="ml-[8px] self-center text-[19px] text-white [font-family:'Liberation_Sans',sans-serif] w-[14px]">A</span>
        <span className="ml-[14px] self-center w-[15px] h-[18px] rounded-[3px] bg-[#ef5a1e] flex items-center justify-center text-[13px] font-bold text-white leading-none shrink-0 [font-family:'Liberation_Sans',sans-serif]">S</span>
        <div className="ml-[17px] w-[60px] h-full flex flex-col items-center justify-center text-[12px] leading-[20px] text-[#e8e8e8] whitespace-nowrap shrink-0">
          <span>22:38</span>
          <span>2018/4/23</span>
        </div>
        <span className="relative ml-[19px] self-center block shrink-0">
          <MessageSquare size={18} fill="#eee" className="text-[#eee]" />
          <span className="absolute left-[7px] top-[9px] w-[15px] h-[15px] rounded-full bg-[#444] text-[11px] font-bold text-white flex items-center justify-center leading-none">1</span>
        </span>
      </div>

      {/* modal dialog */}
      <div className="absolute left-[34px] top-[27px] w-[635px] h-[501px] border border-[#3b94e4] bg-[#f0f0f0] flex flex-col shadow-[0_4px_18px_rgba(0,0,0,0.28)]">
        <div className="h-[30px] shrink-0 bg-white flex items-center pl-[7px] whitespace-nowrap">
          <AppIcon />
          <span className="ml-[5px] w-[48px] shrink-0 text-[12px] text-[#111]">配筋形式</span>
          <Minus size={13} strokeWidth={1} className="ml-[435px] text-[#ccc] shrink-0" />
          <span className="ml-[35px] block w-[11px] h-[11px] border border-[#111] shrink-0" />
          <X size={15} strokeWidth={1.1} className="ml-[33px] text-[#111] shrink-0" />
        </div>
        <div className="h-[422px] shrink-0 flex bg-[#e8e8e8]">
          <div className="w-[610px] ml-[3px] shrink-0">
            <div className="flex gap-[4px] h-[2px]"><div className="w-[303px] bg-black" /><div className="w-[303px] bg-black" /></div>
            <div className="mt-[4px] grid grid-cols-[303px_303px] gap-x-[4px] gap-y-[5px]">
              <div className="h-[205px] bg-black overflow-hidden"><Trough /></div>
              <div className="h-[205px] bg-black overflow-hidden"><Flat /></div>
              <div className="h-[205px] bg-black overflow-hidden"><Trough all /></div>
              <div className="h-[205px] bg-black overflow-hidden border-[3px] border-[#ff0000]"><Ring /></div>
            </div>
          </div>
          <div className="ml-[3px] w-[16px] shrink-0 bg-[#f0f0f0] flex flex-col items-center">
            <ChevronUp size={13} strokeWidth={2.4} className="mt-[2px] text-[#666]" />
            <div className="mt-[127px] w-full h-[261px] bg-[#cdcdcd]" />
            <ChevronDown size={13} strokeWidth={2.4} className="mt-[2px] text-[#666]" />
          </div>
        </div>
        <div className="flex-1 flex items-start pt-[11px] pl-[407px] bg-[#f0f0f0]">
          <div className="w-[89px] h-[26px] border-2 border-[#0078d7] bg-[#e1e1e1] flex items-center justify-center text-[12px] text-[#222]">确定</div>
          <div className="ml-[15px] w-[90px] h-[26px] border border-[#adadad] bg-[#e1e1e1] flex items-center justify-center text-[12px] text-[#222]">取消</div>
        </div>
      </div>

      {/* Sogou input bar */}
      <div className="absolute left-[705px] top-[3px] w-[203px] h-[24px] border border-[#9ab8dc] bg-white flex items-center">
        <span className="ml-[30px] text-[20px] leading-none text-[#2a7ad0] [font-family:'Liberation_Sans',sans-serif]">A</span>
        <span className="ml-[10px] text-[13px] font-bold leading-none text-[#2a7ad0]">•,</span>
        <Smile size={17} strokeWidth={1.8} className="ml-[9px] text-[#2a7ad0] shrink-0" />
        <Mic size={16} strokeWidth={2} className="ml-[8px] text-[#2a7ad0] shrink-0" />
        <Keyboard size={17} strokeWidth={2} className="ml-[7px] text-[#2a7ad0] shrink-0" />
        <User size={16} strokeWidth={2} className="ml-[7px] text-[#a9b8c8] shrink-0" />
        <Shirt size={16} fill="#2a7ad0" className="ml-[4px] text-[#2a7ad0] shrink-0" />
        <Wrench size={15} fill="#2a7ad0" className="ml-[6px] text-[#2a7ad0] shrink-0" />
      </div>
      <div className="absolute left-[705px] top-[2px] w-[24px] h-[25px] rounded-[5px] bg-[#ef5a1e] rotate-[-8deg] flex items-center justify-center text-[22px] font-bold text-white leading-none [font-family:'Liberation_Sans',sans-serif]">S</div>

      {/* floating score ball */}
      <div className="absolute left-[1041px] top-[-29px] w-[48px] h-[48px] rounded-full bg-[#33b24a] border-[2px] border-[#cfcfcf] shadow-[0_2px_3px_rgba(0,0,0,0.4)] flex items-end justify-center pb-[3px] text-[12px] font-bold text-white leading-none">70</div>

      {/* hand-drawn red circles */}
      <svg width="1366" height="768" viewBox="0 0 1366 768" className="absolute left-0 top-0 pointer-events-none">
        <ellipse cx="485" cy="354.5" rx="181" ry="127" fill="none" stroke="#ff0000" strokeWidth="3" />
        <path d="M1267 720C1210 722 1170 690 1170 645C1170 600 1230 562 1300 563C1345 564 1366 600 1366 640C1366 690 1325 720 1267 720" fill="none" stroke="#ff0000" strokeWidth="2.5" />
      </svg>
    </div>
  );
}
